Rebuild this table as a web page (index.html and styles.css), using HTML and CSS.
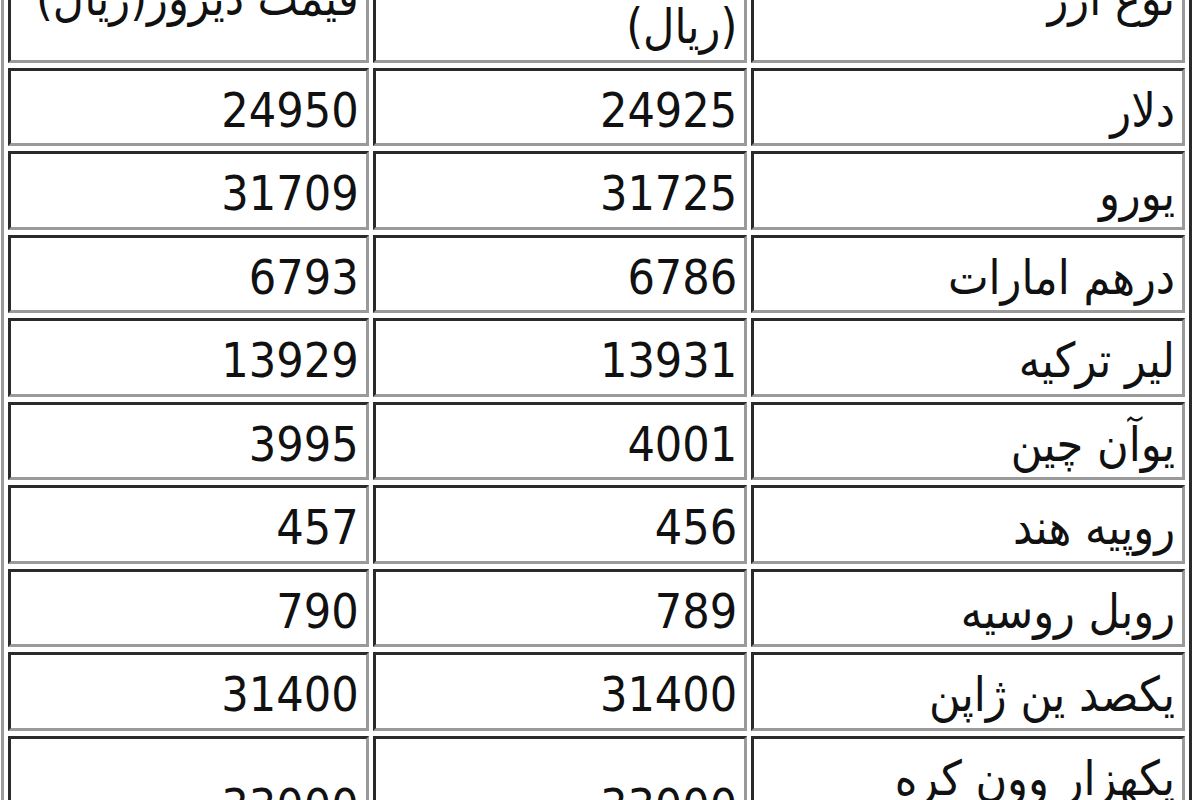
FILE: index.html
```html
<!DOCTYPE html>
<html lang="fa">
<head>
<meta charset="utf-8">
<title>نرخ ارز</title>
<link rel="stylesheet" href="styles.css">
</head>
<body>
<table class="rates" dir="rtl">
  <colgroup>
    <col class="c-name">
    <col class="c-today">
    <col class="c-yesterday">
  </colgroup>
  <tr class="head">
    <td>نوع ارز</td>
    <td>قیمت امروز<br>(ریال)</td>
    <td>قیمت دیروز(ریال)</td>
  </tr>
  <tr><td>دلار</td><td>24925</td><td>24950</td></tr>
  <tr><td>یورو</td><td>31725</td><td>31709</td></tr>
  <tr><td>درهم امارات</td><td>6786</td><td>6793</td></tr>
  <tr><td>لیر ترکیه</td><td>13931</td><td>13929</td></tr>
  <tr><td>یوآن چین</td><td>4001</td><td>3995</td></tr>
  <tr><td>روپیه هند</td><td>456</td><td>457</td></tr>
  <tr><td>روبل روسیه</td><td>789</td><td>790</td></tr>
  <tr><td>یکصد ین ژاپن</td><td>31400</td><td>31400</td></tr>
  <tr><td>یکهزار وون کره<br>جنوبی</td><td>33000</td><td>33000</td></tr>
</table>
</body>
</html>
```

FILE: styles.css
```css
html, body {
  margin: 0;
  padding: 0;
  background: #ffffff;
}

.rates {
  margin: -80px 0 0 1px;
  width: 1191px;
  table-layout: fixed;
  border-collapse: separate;
  border-spacing: 4px 5px;
  border-style: solid;
  border-width: 3px;
  border-color: #9a9a9a #2a2a2a #2a2a2a #9a9a9a;
  font-family: "DejaVu Sans Condensed", "DejaVu Sans", sans-serif;
  font-size: 48px;
  line-height: 56px;
  color: #111111;
}

.c-name { width: 433px; }
.c-today { width: 374px; }
.c-yesterday { width: 360px; }

.rates td {
  border-style: solid;
  border-width: 3px;
  border-color: #2a2a2a #9a9a9a #9a9a9a #2a2a2a;
  padding: 11px 7px 5.5px 7px;
  text-align: right;
  vertical-align: middle;
  white-space: nowrap;
  height: 56px;
}
```
